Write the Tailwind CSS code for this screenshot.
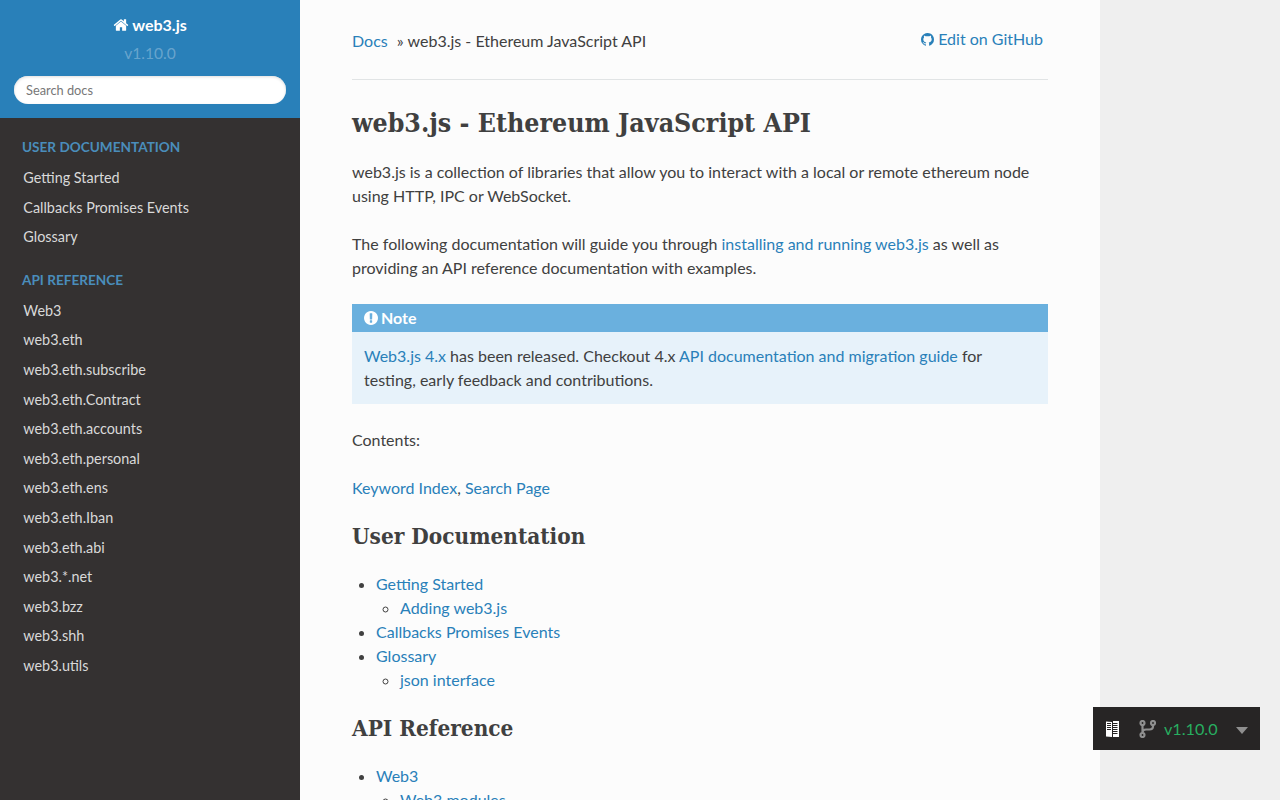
<!DOCTYPE html>
<html lang="en">
<head>
<meta charset="utf-8">
<title>web3.js</title>
<script src="https://cdn.jsdelivr.net/npm/@tailwindcss/browser@4"></script>
</head>
<body class="h-screen overflow-hidden bg-[#efefef] font-['Lato','Noto_Sans',sans-serif] text-[#404040] text-base leading-6">
<div class="flex h-screen overflow-hidden">
  <nav class="w-[300px] shrink-0 h-full bg-[#343131] text-[14.4px]">
    <div class="h-[118px] bg-[#2980b9] px-[14px] pt-[13px] text-center">
      <a class="flex items-center justify-center gap-[3px] h-[24px] text-white font-bold text-[16px]">
        <svg class="w-[16px] h-[16px]" viewBox="0 0 1792 1792" fill="currentColor"><path d="M1472 992v480q0 26-19 45t-45 19h-384v-384h-256v384h-384q-26 0-45-19t-19-45v-480q0-1 .5-3t.5-3l575-474 575 474q1 2 1 6zm223-69l-62 74q-8 9-21 11h-3q-13 0-21-7l-692-577-692 577q-12 8-24 7-13-2-21-11l-62-74q-8-10-7-23.500t11-21.500l719-599q32-26 76-26t76 26l244 204v-195q0-14 9-23t23-9h192q14 0 23 9t9 23v408l219 182q10 8 11 21.500t-7 23.500z"/></svg>
        <span>web3.js</span>
      </a>
      <div class="mt-[4px] h-[24px] leading-[24px] text-[15.6px] font-normal text-white/30">v1.10.0</div>
      <input class="mt-[11px] w-full h-[28px] rounded-full bg-white px-[12px] text-[12.8px] font-['Lato'] text-[#333] placeholder:text-[#777] shadow-[inset_0_1px_3px_#ddd] outline-none" placeholder="Search docs">
    </div>
    <div class="pt-[19px]">
      <p class="h-[20px] leading-[20px] pl-[22px] text-[13.6px] font-bold text-[#4a8dbb] uppercase">User Documentation</p>
      <ul class="mt-[6px] text-[#d9d9d9]">
        <li class="h-[29.6px] leading-[29.6px] pl-[23.3px]">Getting Started</li>
        <li class="h-[29.6px] leading-[29.6px] pl-[23.3px]">Callbacks Promises Events</li>
        <li class="h-[29.6px] leading-[29.6px] pl-[23.3px]">Glossary</li>
      </ul>
      <p class="mt-[18px] h-[20px] leading-[20px] pl-[22px] text-[13.6px] font-bold text-[#4a8dbb] uppercase">API Reference</p>
      <ul class="mt-[6px] text-[#d9d9d9]">
        <li class="h-[29.6px] leading-[29.6px] pl-[23.3px]">Web3</li>
        <li class="h-[29.6px] leading-[29.6px] pl-[23.3px]">web3.eth</li>
        <li class="h-[29.6px] leading-[29.6px] pl-[23.3px]">web3.eth.subscribe</li>
        <li class="h-[29.6px] leading-[29.6px] pl-[23.3px]">web3.eth.Contract</li>
        <li class="h-[29.6px] leading-[29.6px] pl-[23.3px]">web3.eth.accounts</li>
        <li class="h-[29.6px] leading-[29.6px] pl-[23.3px]">web3.eth.personal</li>
        <li class="h-[29.6px] leading-[29.6px] pl-[23.3px]">web3.eth.ens</li>
        <li class="h-[29.6px] leading-[29.6px] pl-[23.3px]">web3.eth.Iban</li>
        <li class="h-[29.6px] leading-[29.6px] pl-[23.3px]">web3.eth.abi</li>
        <li class="h-[29.6px] leading-[29.6px] pl-[23.3px]">web3.*.net</li>
        <li class="h-[29.6px] leading-[29.6px] pl-[23.3px]">web3.bzz</li>
        <li class="h-[29.6px] leading-[29.6px] pl-[23.3px]">web3.shh</li>
        <li class="h-[29.6px] leading-[29.6px] pl-[23.3px]">web3.utils</li>
      </ul>
    </div>
  </nav>
  <main class="w-[800px] shrink-0 h-full bg-[#fcfcfc] px-[52px] pt-[27px] overflow-hidden">
    <div class="flex justify-between h-[52px] border-b border-[#e1e4e5] box-content pb-0">
      <div class="pt-[2px]"><a class="text-[#2980b9]">Docs</a><span class="ml-[9px] mr-[4px]">»</span><span>web3.js - Ethereum JavaScript API</span></div>
      <a class="flex items-start gap-[4px] mr-[5px] text-[#2980b9]"><svg class="w-[13px] h-[13px] mt-[5.5px]" viewBox="128 128 1536 1536" fill="currentColor"><path d="M896 128q209 0 385.500 103t279.500 279.500 103 385.500q0 251-146.500 451.500t-378.500 277.500q-27 5-40-7t-13-30q0-3 .5-76.500t.5-134.500q0-97-52-142 57-6 102.500-18t94-39 81-66.500 53-105 20.500-150.500q0-119-79-206 37-91-8-204-28-9-81 11t-92 44l-38 24q-93-26-192-26t-192 26q-16-11-42.500-27t-83.500-38.500-85-13.500q-45 113-8 204-79 87-79 206 0 85 20.500 150t52.500 105 80.500 67 94 39 102.500 18q-39 36-49 103-21 10-45 15t-57 5-65.500-21.500-55.500-62.500q-19-32-48.500-52t-49.500-24l-20-3q-21 0-29 4.500t-5 11.500 9 14 13 12l7 5q22 10 43.500 38t31.500 51l10 23q13 38 44 63t67 32 69.500 7 55.500-3l23-4q0 38 .5 88.500t.5 54.500q0 18-13 30t-40 7q-232-77-378.500-277.500t-146.500-451.500q0-209 103-385.500t279.500-279.500 385.500-103z"/></svg><span>Edit on GitHub</span></a>
    </div>
    <h1 class="mt-[23px] h-[40px] leading-[40px] font-['DejaVu_Serif_Condensed','DejaVu_Serif',serif] font-bold text-[26.5px]">web3.js - Ethereum JavaScript API</h1>
    <p class="mt-[17px]">web3.js is a collection of libraries that allow you to interact with a local or remote ethereum node using HTTP, IPC or WebSocket.</p>
    <p class="mt-[24px]">The following documentation will guide you through <a class="text-[#2980b9]">installing and running web3.js</a> as well as providing an API reference documentation with examples.</p>
    <div class="mt-[24px] h-[100px] bg-[#e7f2fa]">
      <p class="h-[28px] bg-[#6ab0de] px-[12px] flex items-center gap-[3px] font-bold text-white"><svg class="w-[14px] h-[14px]" viewBox="128 128 1536 1536" fill="currentColor"><path d="M896 128q209 0 385.500 103t279.500 279.500 103 385.500-103 385.500-279.500 279.500-385.500 103-385.500-103-279.500-279.500-103-385.500 103-385.500 279.500-279.500 385.500-103zm128 1247v-190q0-14-9-23.500t-22-9.500h-192q-13 0-23 10t-10 23v190q0 13 10 23t23 10h192q13 0 22-9.500t9-23.500zm-2-344l18-621q0-12-10-18-10-8-24-8h-220q-14 0-24 8-10 6-10 18l17 621q0 10 10 17.500t24 7.500h185q14 0 23.500-7.500t10.500-17.500z"/></svg>Note</p>
      <p class="px-[12px] pt-[12px]"><a class="text-[#2980b9]">Web3.js 4.x</a> has been released. Checkout 4.x <a class="text-[#2980b9]">API documentation and migration guide</a> for testing, early feedback and contributions.</p>
    </div>
    <p class="mt-[24px]">Contents:</p>
    <p class="mt-[24px]"><a class="text-[#2980b9]">Keyword Index</a>, <a class="text-[#2980b9]">Search Page</a></p>
    <h2 class="mt-[20px] h-[32px] leading-[32px] font-['DejaVu_Serif_Condensed','DejaVu_Serif',serif] font-bold text-[22.4px]">User Documentation</h2>
    <ul class="mt-[20px] list-disc pl-[24px] text-[#2980b9] marker:text-[#404040]">
      <li>Getting Started
        <ul class="list-[circle] pl-[24px]"><li>Adding web3.js</li></ul>
      </li>
      <li>Callbacks Promises Events</li>
      <li>Glossary
        <ul class="list-[circle] pl-[24px]"><li>json interface</li></ul>
      </li>
    </ul>
    <h2 class="mt-[20px] h-[32px] leading-[32px] font-['DejaVu_Serif_Condensed','DejaVu_Serif',serif] font-bold text-[22.4px]">API Reference</h2>
    <ul class="mt-[20px] list-disc pl-[24px] text-[#2980b9] marker:text-[#404040]">
      <li>Web3
        <ul class="list-[circle] pl-[24px]"><li>Web3 modules</li></ul>
      </li>
    </ul>
  </main>
</div>
<div class="fixed right-[20px] bottom-[50px] w-[167px] h-[43px] bg-[#272525] flex items-center text-[#27ae60] text-[16.2px]">
  <svg class="ml-[12px] w-[15px] h-[18px]" viewBox="0 0 15 18"><path fill="#fff" d="M1 1.500l6 .5v15l-6-.5zM8 1h6v16H8z"/><path stroke="#272525" stroke-width="1" fill="none" d="M2 3.500h4M2 5.500h4M2 7.500h4M2 9.500h4M8 3.500h4.500M8 5.500h4.500M8 7.500h4.500M8 9.500h4.500M8 11.500h4.500M8 13.500h4.500"/></svg>
  <svg class="ml-[19px] w-[17px] h-[18px]" viewBox="0 0 17 18" fill="none" stroke="#8f8f8f" stroke-width="2.200"><circle cx="3.500" cy="3" r="2"/><circle cx="14" cy="3" r="2"/><circle cx="3.500" cy="15" r="2"/><path d="M3.500 5v8M14 5v1.500c0 2-1.500 3-3.500 3H7c-2 0-3.500 1-3.500 3"/></svg>
  <span class="ml-[8px]">v1.10.0</span>
  <svg class="ml-[18px] mt-[3px] w-[12px] h-[7px]" viewBox="0 0 12 7" fill="#8f8f8f"><path d="M0 0h12L6 7z"/></svg>
</div>
</body>
</html>
